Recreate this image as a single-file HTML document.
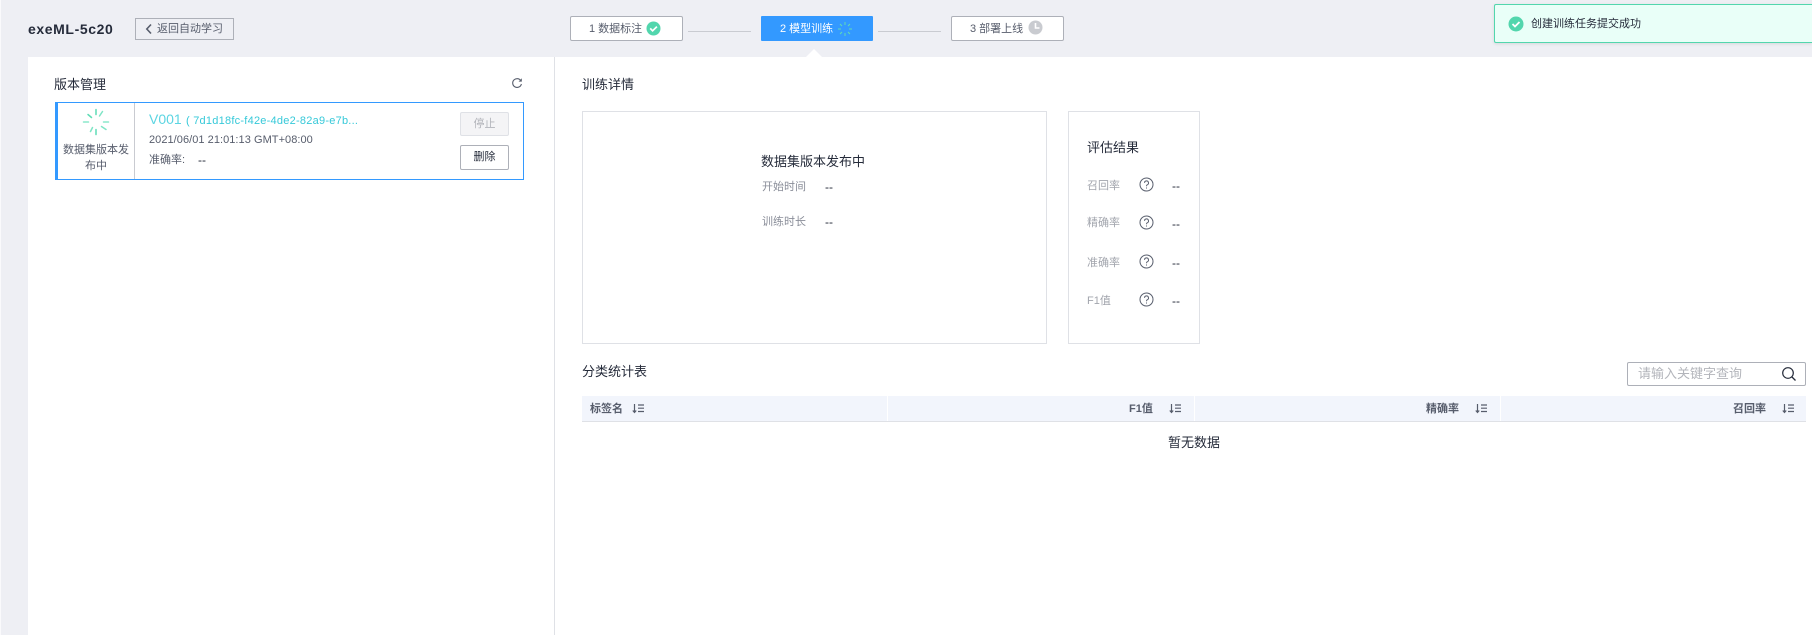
<!DOCTYPE html>
<html lang="zh"><head><meta charset="utf-8"><title>exeML-5c20</title>
<style>
html,body{margin:0;padding:0;width:1812px;height:635px;overflow:hidden;background:#fff}
body{position:relative;font-family:"Liberation Sans","Noto Sans CJK SC",sans-serif;font-size:12px;color:#252b3a}
.a{position:absolute;box-sizing:border-box}
.t{position:absolute;white-space:nowrap;line-height:20px;height:20px}
.g{color:#8a8e99}
svg{position:absolute;display:block}
.step{position:absolute;top:16px;height:25px;width:113px;background:#fff;border:1px solid #adb0b8;border-radius:2px;box-sizing:border-box}
.ln{position:absolute;top:31px;height:1px;width:63px;background:#c9cbd1}
.box{position:absolute;box-sizing:border-box;background:#fff;border:1px solid #dfe1e6}
</style></head><body>
<div class="a" style="left:0;top:0;width:1812px;height:57px;background:#eeeff4"></div>
<div class="a" style="left:0;top:57px;width:28px;height:578px;background:#eeeff4"></div>
<div class="a" style="left:0;top:0;width:1px;height:635px;background:#fafafc"></div>
<div class="a" style="left:554px;top:57px;width:1px;height:578px;background:#dfe1e6"></div>

<div class="t" style="left:28px;top:19px;font-size:14px;font-weight:bold;letter-spacing:.6px;color:#252b3a">exeML-5c20</div>
<div class="a" style="left:135px;top:18px;width:99px;height:22px;border:1px solid #adb0b8"></div>
<svg style="left:144px;top:23px" width="10" height="12" viewBox="0 0 10 12"><path d="M7 1.5 2.8 6 7 10.5" fill="none" stroke="#575d6c" stroke-width="1.6"/></svg>
<div class="t" style="left:157px;top:19px;font-size:11px;color:#575d6c">返回自动学习</div>

<div class="step" style="left:570px"></div>
<div class="t" style="left:589px;top:19px;font-size:11px;color:#575d6c">1 数据标注</div>
<svg style="left:646px;top:21px" width="15" height="15" viewBox="0 0 15 15"><circle cx="7.5" cy="7.5" r="7" fill="#52d6ad"/><path d="M4.2 7.4 6.6 9.8 10.9 5.6" fill="none" stroke="#fff" stroke-width="1.7"/></svg>
<div class="ln" style="left:688px"></div>
<div class="a" style="left:761px;top:16px;width:112px;height:25px;background:#3399ff;border-radius:1px"></div>
<div class="t" style="left:780px;top:19px;font-size:11px;color:#fff">2 模型训练</div>
<svg style="left:837px;top:21px" width="16" height="16" viewBox="0 0 16 16"><g stroke="#5fdcb5" stroke-width="1"><path d="M8 1V4M8 12V15M1 8H4M12 8H15M3 3 5 5M11 11 13 13M13 3 11 5M5 11 3 13"/></g></svg>
<div class="ln" style="left:878px"></div>
<div class="step" style="left:951px"></div>
<div class="t" style="left:970px;top:19px;font-size:11px;color:#575d6c">3 部署上线</div>
<svg style="left:1028px;top:20px" width="15" height="15" viewBox="0 0 15 15"><circle cx="7.5" cy="7.5" r="7" fill="#c9cbd0"/><path d="M7.5 3V8H11.5" fill="none" stroke="#fff" stroke-width="1.6"/></svg>
<svg style="left:804px;top:48px" width="20" height="9" viewBox="0 0 20 9"><path d="M2 9 10 1 18 9Z" fill="#fff"/></svg>

<div class="a" style="left:1494px;top:4px;width:318px;height:39px;background:#e9fff8;border:1px solid #52d6ad;border-right:0;border-radius:2px 0 0 2px;box-shadow:0 1px 3px rgba(0,0,0,.1)"></div>
<svg style="left:1508px;top:16px" width="16" height="16" viewBox="0 0 16 16"><circle cx="8" cy="8" r="7.5" fill="#52d6ad"/><path d="M4.5 8 7 10.5 11.5 6" fill="none" stroke="#fff" stroke-width="1.8"/></svg>
<div class="t" style="left:1531px;top:14px;font-size:11px;color:#252b3a">创建训练任务提交成功</div>

<div class="t" style="left:54px;top:75px;font-size:13px">版本管理</div>
<svg style="left:511px;top:77px" width="12" height="12" viewBox="0 0 12 12"><path d="M10 4A4.4 4.4 0 1 0 10.4 7" fill="none" stroke="#575d6c" stroke-width="1.1"/><path d="M10.8 1.2V4.6H7.6Z" fill="#575d6c"/></svg>

<div class="a" style="left:55px;top:102px;width:469px;height:78px;border:1px solid #3399ff;border-left:3px solid #3399ff;background:#fff"></div>
<div class="a" style="left:134px;top:103px;width:1px;height:76px;background:#c9cbd1"></div>
<svg style="left:82px;top:108px" width="28" height="28" viewBox="0 0 28 28"><g stroke-width="1.5" stroke-linecap="round"><path stroke="#5fdcb5" d="M14 1.5V6.5"/><path stroke="#7fe5c6" d="M20.5 3.5 17.5 8"/><path stroke="#8be8cc" d="M26.5 14H21.5"/><path stroke="#7fe5c6" d="M24 21.5 19.5 18.5"/><path stroke="#5fdcb5" d="M14 26.5V21.5"/><path stroke="#7fe5c6" d="M8.5 23.5 10.5 19.5"/><path stroke="#8be8cc" d="M1.5 14H6.5"/><path stroke="#5fdcb5" d="M6 6.5 9.5 9.5"/></g></svg>
<div class="t" style="left:58px;top:140px;width:76px;text-align:center;font-size:11px;color:#575d6c">数据集版本发</div>
<div class="t" style="left:58px;top:156px;width:76px;text-align:center;font-size:11px;color:#575d6c">布中</div>
<div class="t" style="left:149px;top:109px;font-size:14px;color:#5cd5e2">V001</div>
<div class="t" style="left:186px;top:111px;font-size:11px;color:#36c9d9;letter-spacing:.24px">( 7d1d18fc-f42e-4de2-82a9-e7b...</div>
<div class="t" style="left:149px;top:130px;font-size:11px;color:#575d6c;letter-spacing:.05px">2021/06/01 21:01:13 GMT+08:00</div>
<div class="t" style="left:149px;top:150px;font-size:11px;color:#575d6c">准确率:</div>
<div class="t" style="left:198px;top:150px;font-size:12px;color:#252b3a">--</div>
<div class="a" style="left:460px;top:112px;width:49px;height:24px;background:#f4f4f6;border:1px solid #dfe1e6;border-radius:2px;text-align:center;line-height:22px;font-size:11px;color:#b3b5bb">停止</div>
<div class="a" style="left:460px;top:145px;width:49px;height:25px;background:#fff;border:1px solid #adb0b8;border-radius:2px;text-align:center;line-height:23px;font-size:11px;color:#252b3a">删除</div>

<div class="t" style="left:582px;top:75px;font-size:13px">训练详情</div>
<div class="box" style="left:582px;top:111px;width:465px;height:233px"></div>
<div class="t" style="left:761px;top:152px;font-size:13px">数据集版本发布中</div>
<div class="t g" style="left:762px;top:177px;font-size:11px">开始时间</div>
<div class="t" style="left:825px;top:177px;font-size:12px">--</div>
<div class="t g" style="left:762px;top:212px;font-size:11px">训练时长</div>
<div class="t" style="left:825px;top:212px;font-size:12px">--</div>

<div class="box" style="left:1068px;top:111px;width:132px;height:233px"></div>
<div class="t" style="left:1087px;top:138px;font-size:13px">评估结果</div>
<div class="t g" style="left:1087px;top:176px;font-size:11px;color:#a2a5ad">召回率</div>
<div class="t g" style="left:1087px;top:213px;font-size:11px;color:#a2a5ad">精确率</div>
<div class="t g" style="left:1087px;top:253px;font-size:11px;color:#a2a5ad">准确率</div>
<div class="t g" style="left:1087px;top:291px;font-size:11px;color:#a2a5ad">F1值</div>
<svg style="left:1139px;top:177px" width="15" height="15" viewBox="0 0 15 15"><circle cx="7.5" cy="7.5" r="6.5" fill="none" stroke="#575d6c"/><path d="M5.5 5.8A2 2 0 1 1 8.2 7.8C7.6 8.2 7.5 8.6 7.5 9.3" fill="none" stroke="#575d6c"/><path d="M7 10.5H8V11.5H7Z" fill="#575d6c"/></svg>
<svg style="left:1139px;top:215px" width="15" height="15" viewBox="0 0 15 15"><circle cx="7.5" cy="7.5" r="6.5" fill="none" stroke="#575d6c"/><path d="M5.5 5.8A2 2 0 1 1 8.2 7.8C7.6 8.2 7.5 8.6 7.5 9.3" fill="none" stroke="#575d6c"/><path d="M7 10.5H8V11.5H7Z" fill="#575d6c"/></svg>
<svg style="left:1139px;top:254px" width="15" height="15" viewBox="0 0 15 15"><circle cx="7.5" cy="7.5" r="6.5" fill="none" stroke="#575d6c"/><path d="M5.5 5.8A2 2 0 1 1 8.2 7.8C7.6 8.2 7.5 8.6 7.5 9.3" fill="none" stroke="#575d6c"/><path d="M7 10.5H8V11.5H7Z" fill="#575d6c"/></svg>
<svg style="left:1139px;top:292px" width="15" height="15" viewBox="0 0 15 15"><circle cx="7.5" cy="7.5" r="6.5" fill="none" stroke="#575d6c"/><path d="M5.5 5.8A2 2 0 1 1 8.2 7.8C7.6 8.2 7.5 8.6 7.5 9.3" fill="none" stroke="#575d6c"/><path d="M7 10.5H8V11.5H7Z" fill="#575d6c"/></svg>
<div class="t" style="left:1172px;top:176px;font-size:12px">--</div>
<div class="t" style="left:1172px;top:214px;font-size:12px">--</div>
<div class="t" style="left:1172px;top:253px;font-size:12px">--</div>
<div class="t" style="left:1172px;top:291px;font-size:12px">--</div>

<div class="t" style="left:582px;top:362px;font-size:13px">分类统计表</div>
<div class="a" style="left:1627px;top:362px;width:179px;height:24px;border:1px solid #adb0b8;border-radius:2px;background:#fff"></div>
<div class="t" style="left:1638px;top:364px;font-size:13px;color:#b3b5bb">请输入关键字查询</div>
<svg style="left:1781px;top:366px" width="16" height="16" viewBox="0 0 16 16"><circle cx="7" cy="7" r="5.3" fill="none" stroke="#252b3a" stroke-width="1.2"/><path d="M11 11 14.5 14.5" stroke="#252b3a" stroke-width="1.3"/></svg>

<div class="a" style="left:582px;top:396px;width:1224px;height:26px;background:#f2f5fc;border-bottom:1px solid #dfe1e6"></div>
<div class="a" style="left:887px;top:396px;width:1px;height:25px;background:#fff"></div>
<div class="a" style="left:1194px;top:396px;width:1px;height:25px;background:#fff"></div>
<div class="a" style="left:1500px;top:396px;width:1px;height:25px;background:#fff"></div>
<div class="t" style="left:590px;top:399px;font-size:11px;color:#575d6c;font-weight:bold">标签名</div>
<div class="t" style="left:1129px;top:399px;font-size:11px;color:#575d6c;font-weight:bold">F1值</div>
<div class="t" style="left:1426px;top:399px;font-size:11px;color:#575d6c;font-weight:bold">精确率</div>
<div class="t" style="left:1733px;top:399px;font-size:11px;color:#575d6c;font-weight:bold">召回率</div>
<svg style="left:632px;top:403px" width="13" height="11" viewBox="0 0 13 11"><path d="M2.5 1V9M.8 7.5 2.5 9.5 4.2 7.5M6 2H12M6 5.2H12M6 8.5H12" fill="none" stroke="#575d6c" stroke-width="1.2"/></svg>
<svg style="left:1169px;top:403px" width="13" height="11" viewBox="0 0 13 11"><path d="M2.5 1V9M.8 7.5 2.5 9.5 4.2 7.5M6 2H12M6 5.2H12M6 8.5H12" fill="none" stroke="#575d6c" stroke-width="1.2"/></svg>
<svg style="left:1475px;top:403px" width="13" height="11" viewBox="0 0 13 11"><path d="M2.5 1V9M.8 7.5 2.5 9.5 4.2 7.5M6 2H12M6 5.2H12M6 8.5H12" fill="none" stroke="#575d6c" stroke-width="1.2"/></svg>
<svg style="left:1782px;top:403px" width="13" height="11" viewBox="0 0 13 11"><path d="M2.5 1V9M.8 7.5 2.5 9.5 4.2 7.5M6 2H12M6 5.2H12M6 8.5H12" fill="none" stroke="#575d6c" stroke-width="1.2"/></svg>
<div class="t" style="left:1168px;top:433px;font-size:13px">暂无数据</div>
</body></html>
